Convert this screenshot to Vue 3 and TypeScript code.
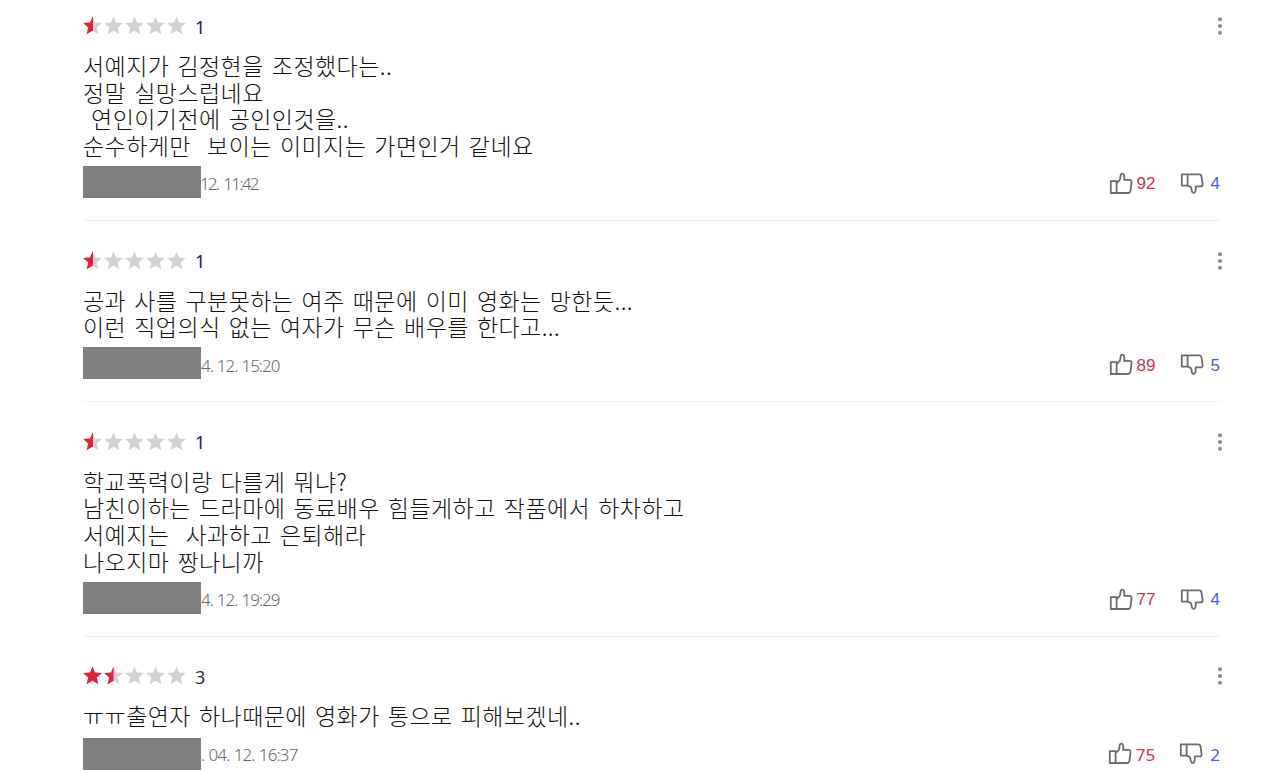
<script setup lang="ts">
interface Review {
  rating: number
  score: number
  lines: string[]
  date: string
  spacing: string
  up: number
  down: number
  face: string
}

const reviews: Review[] = [
  {
    rating: 0.5,
    score: 1,
    lines: ['서예지가 김정현을 조정했다는..', '정말 실망스럽네요', ' 연인이기전에 공인인것을..', '순수하게만  보이는 이미지는 가면인거 같네요'],
    date: '12. 11:42',
    spacing: 'tight',
    up: 92,
    down: 4,
    face: 'arial',
  },
  {
    rating: 0.5,
    score: 1,
    lines: ['공과 사를 구분못하는 여주 때문에 이미 영화는 망한듯...', '이런 직업의식 없는 여자가 무슨 배우를 한다고...'],
    date: '4. 12. 15:20',
    spacing: 'normal',
    up: 89,
    down: 5,
    face: 'arial',
  },
  {
    rating: 0.5,
    score: 1,
    lines: ['학교폭력이랑 다를게 뭐냐?', '남친이하는 드라마에 동료배우 힘들게하고 작품에서 하차하고', '서예지는  사과하고 은퇴해라', '나오지마 짱나니까'],
    date: '4. 12. 19:29',
    spacing: 'normal',
    up: 77,
    down: 4,
    face: 'arial',
  },
  {
    rating: 1.5,
    score: 3,
    lines: ['ㅠㅠ출연자 하나때문에 영화가 통으로 피해보겠네..'],
    date: '. 04. 12. 16:37',
    spacing: 'loose',
    up: 75,
    down: 2,
    face: 'noto',
  },
]

const star = 'M9.5 0.5L12 6.6L18.9 7.1L13.7 11.5L15.4 18.3L9.5 14.7L3.6 18.3L5.3 11.5L0.1 7.1L7 6.6Z'
</script>

<template>
  <main class="list">
    <article v-for="(r, i) in reviews" :key="i" class="review">
      <header class="head">
        <svg class="stars" width="104" height="20" viewBox="0 0 104 20">
          <defs>
            <clipPath :id="'fill' + i"><rect x="0" y="0" :width="r.rating * 21 - (r.rating > 1 ? 1 : 0.5)" height="20" /></clipPath>
          </defs>
          <path v-for="n in 5" :key="n" :d="star" :transform="`translate(${(n - 1) * 21} 0)`" fill="#d2d2d4" />
          <g :clip-path="`url(#fill${i})`">
            <path v-for="n in 5" :key="n" :d="star" :transform="`translate(${(n - 1) * 21} 0)`" fill="#e0223c" />
          </g>
        </svg>
        <span class="score" :class="{ dark: r.score > 1 }">{{ r.score }}</span>
        <svg class="more" width="6" height="20" viewBox="0 0 6 20" fill="#8c8c8c">
          <circle cx="3" cy="3.3" r="2" /><circle cx="3" cy="10" r="2" /><circle cx="3" cy="16.7" r="2" />
        </svg>
      </header>
      <div class="text">
        <p v-for="(l, k) in r.lines" :key="k">{{ l }}</p>
      </div>
      <footer class="foot">
        <span class="mask"></span>
        <span class="date" :class="r.spacing">{{ r.date }}</span>
        <div class="votes" :class="r.face">
          <svg width="24" height="24" viewBox="0 0 24 24" class="icon">
            <path d="M1.8 9.2H7.6V21H1.8ZM7.6 11.2L10.6 8.2C11.6 6.8 11.3 4.6 11.7 3C12.2 1.2 14.5 1.2 15.1 3C15.6 4.8 15.3 6.4 15.1 7.8H20.6C22 7.8 22.7 8.8 22.5 10.2L21.5 18.6C21.2 20.2 20.4 21 19 21H7.6" />
          </svg>
          <span class="up">{{ r.up }}</span>
          <svg width="24" height="24" viewBox="0 0 24 24" class="icon second">
            <path d="M1.8 2.4H7.6V13.6H1.8ZM7.6 2.4H19C20.4 2.4 21.2 3 21.5 4.4L22.6 12.2C22.8 13.6 22 14.4 20.6 14.4H15.8C15.6 16.4 15.9 18 15.4 19.6C14.8 21.4 12.5 21.4 12 19.6C11.5 18 11.6 16.2 10.6 14.8L7.6 13.6" />
          </svg>
          <span class="down">{{ r.down }}</span>
        </div>
      </footer>
    </article>
  </main>
</template>

<style scoped>
.list {
  box-sizing: border-box;
  height: 772px;
  overflow: hidden;
  padding-left: 83px;
  background: #fff;
  font-family: "Noto Sans", "Noto Sans CJK KR", sans-serif;
}
.review {
  width: 1138px;
  padding: 29.3px 0 22.4px;
  border-bottom: 1px solid #f0f0f0;
}
.review:first-child {
  padding-top: 16px;
}
.head {
  display: flex;
  align-items: center;
  height: 20px;
}
.stars {
  flex: none;
}
.score {
  margin-left: 8px;
  padding-top: 1px;
  font-size: 18px;
  line-height: 20px;
  color: #2b1a55;
}
.score.dark {
  color: #333;
}
.more {
  margin: 0 -2px 0 auto;
}
.text {
  margin-top: 16px;
  font-family: "Noto Sans CJK KR", sans-serif;
  font-weight: 300;
  font-size: 23px;
  color: #111;
  letter-spacing: 0.42px;
  word-spacing: 2.6px;
}
.text p {
  margin: 0;
  height: 26.67px;
  line-height: 26.67px;
  white-space: pre;
}
.foot {
  display: flex;
  align-items: center;
  height: 32px;
  margin-top: 7.2px;
}
.review:last-child .foot {
  margin-top: 8.8px;
}
.mask {
  width: 118px;
  height: 32px;
  background: #808080;
}
.date {
  padding-top: 4px;
  font-size: 17px;
  font-weight: 300;
  letter-spacing: -1px;
  word-spacing: 0.6px;
  color: #666;
  white-space: pre;
}
.date.tight {
  margin-left: -1px;
  letter-spacing: -1.7px;
  word-spacing: 2px;
}
.date.loose {
  padding-top: 2px;
  letter-spacing: -0.85px;
}
.votes {
  display: flex;
  align-items: center;
  margin-left: auto;
  margin-right: 1px;
  padding-top: 4px;
  font-size: 17px;
}
.votes.arial {
  font-family: "Liberation Sans", sans-serif;
}
.votes span {
  padding-top: 1px;
}
.votes.noto {
  padding-top: 1px;
}
.votes.noto span {
  padding-top: 0;
}
.icon {
  margin-right: 4px;
  fill: none;
  stroke: #6c6c6c;
  stroke-width: 1.8;
  stroke-linejoin: round;
}
.second {
  margin-left: 24px;
  margin-right: 7px;
}
.up {
  color: #d4334a;
}
.down {
  color: #4563c4;
}
</style>
